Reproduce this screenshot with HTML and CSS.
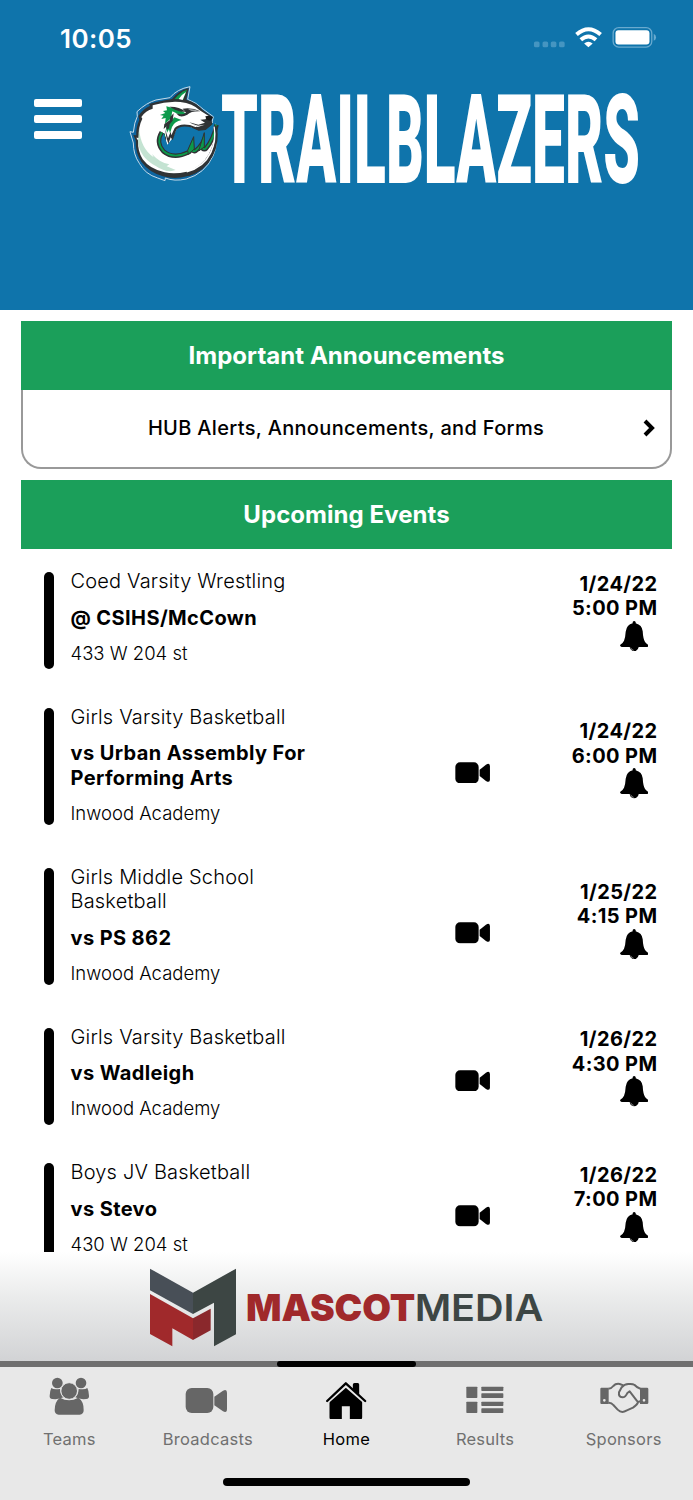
FILE: index.html
```
<!doctype html>
<html lang="en">
<head>
	<meta charset="UTF-8" />
	<title>Trailblazers</title>
	<link rel="stylesheet" href="styles.css">
</head>
<body>
	<svg class="defs">
		<symbol id="camera" viewBox="75 635 106 65">
			<rect x="76" y="636" width="70" height="63" rx="14"/>
			<path d="M149 658L168 643Q180 636 180 648V687Q180 699 168 692L149 677Z"/>
		</symbol>
		<symbol id="bell" viewBox="570 211 85 91">
			<path d="M608 218V214Q612 208 617 214V218Q636 223 638 242Q639 264 645 274Q649 279 654 282Q656 288 650 289H626Q624 301 612 302Q600 300 599 289H575Q568 287 571 282Q579 277 582 270Q586 261 587 243Q590 222 608 218Z"/>
			<path d="M602 291Q604 298 611 299" fill="none" stroke="#fff" stroke-width="1.5"/>
		</symbol>
		<path id="curl" d="M131 160Q115 187 135 209Q162 231 203 211L221 170L223 207Q245 189 253 158L253 201Q275 175 283 133"/>
	</svg>
	<section id="wrap">
		<header>
			<div class="status">
				<span class="time">10:05</span>
				<svg class="signal" viewBox="100 25 375 100">
					<g fill="#4595c1">
						<rect x="101" y="96" width="17" height="18" rx="5"/>
						<rect x="127" y="96" width="17" height="18" rx="5"/>
						<rect x="152" y="96" width="17" height="18" rx="5"/>
						<rect x="177" y="96" width="17" height="18" rx="5"/>
					</g>
					<g fill="none" stroke="#fff" stroke-width="12">
						<path d="M230 75Q266 43 303 75"/>
						<path d="M243 91Q266 71 289 91"/>
					</g>
					<path d="M253 102Q266 92 279 102L266 114Z" fill="#fff"/>
					<rect x="341" y="54" width="117" height="59" rx="17" fill="none" stroke="#69aacf" stroke-width="4"/>
					<rect x="348" y="62" width="103" height="43" rx="9" fill="#fff"/>
					<path d="M464 73Q471 76 471 84Q471 91 464 94Z" fill="#69aacf"/>
				</svg>
			</div>
			<div class="brand">
				<a href="javascript:;" class="menu"><i></i><i></i><i></i></a>
				<svg class="logo" viewBox="0 0 530 110">
					<g transform="scale(.3333)">
						<!-- outer keyline -->
						<path d="M210 20L203 58Q230 68 250 88L280 110L276 127L285 128Q297 190 279 228Q255 281 199 297Q163 305 136 294L135 302L113 294Q76 283 58 250Q40 224 40 189L30 155L40 157Q43 126 52 109L51 95Q80 68 108 60L150 53Q171 27 210 20Z" fill="#0d65a0" stroke="#c7dcea" stroke-width="3"/>
						<path d="M206 24L199 59Q230 68 248 90L277 111Q277 125 264 137L283 133Q296 180 275 228Q253 275 204 288Q164 299 129 289Q86 276 64 245Q46 219 47 181L40 165L49 166Q47 145 58 119L55 108Q68 88 90 77L87 72Q112 64 156 57Q176 31 206 24Z" fill="#303335"/>
						<path d="M201 29L190 58L164 57Q179 37 201 29Z" fill="#0b9a4a"/>
						<path d="M198 36L188 60L176 57Q184 44 198 36Z" fill="#fff"/>
						<!-- body -->
						<path d="M98 76Q139 63 181 66Q218 70 239 91L270 110L266 122L253 136L228 141L210 150L246 208L262 202Q277 184 281 160Q285 185 267 222Q244 262 200 275Q164 284 134 277Q90 268 68 238Q52 211 55 183L49 173L58 174Q53 143 67 116L64 111Q77 91 98 86Z" fill="#fff"/>
						<path d="M57 145Q62 206 101 232L96 222Q120 249 148 253L140 259L167 270Q141 281 106 257Q59 232 54 185Z" fill="#c4e3d2"/>
						<!-- curl of the tail -->
						<g fill="none" stroke-linejoin="round">
							<use href="#curl" stroke="#303335" stroke-width="27"/>
							<use href="#curl" stroke="#0b9a4a" stroke-width="18"/>
							<use href="#curl" stroke="#303335" stroke-width="7"/>
						</g>
						<path d="M131 160Q115 187 135 209Q162 231 203 211L221 170L223 207Q245 189 253 158L253 201Q275 175 283 133L291 128L282 119L276 134L257 148L236 151L212 141Q185 132 170 147L158 174L142 194Z" fill="#0f74ab"/>
						<path d="M203 211L205 223L223 207L221 170ZM253 158L246 180L236 213L253 201Z" fill="#0b9a4a" stroke="#303335" stroke-width="3"/>
						<path d="M283 140Q290 178 272 218Q251 262 200 275" fill="none" stroke="#fff" stroke-width="5"/>
						<path d="M287 138Q297 185 276 226Q254 271 204 286" fill="none" stroke="#303335" stroke-width="6"/>
						<!-- face -->
						<path d="M137 120L163 102L208 118L214 132Q183 130 167 144L157 168L144 188L135 166Z" fill="#fff"/>
						<path d="M135 146L139 171L145 192L152 172L158 181L169 149Q184 134 212 142L236 152L257 150L277 133L275 122L257 139L234 144L210 135Q178 129 164 144L154 166L152 155L144 175Z" fill="#303335"/>
						<path d="M163 112L185 120Q163 124 156 141L150 160L147 148L141 158L138 141Z" fill="#0b9a4a"/>
						<path d="M139 79L180 90L199 101L180 105L157 94L153 115L135 131L137 114L124 117L131 107L120 105L136 99L129 93L141 91Z" fill="#0b9a4a"/>
						<path d="M148 80Q177 79 197 95Q181 97 165 89ZM133 132L149 121L151 110L161 100L158 122L149 133L147 145L139 149L140 139L131 147Z" fill="#303335"/>
						<path d="M188 86Q218 82 241 94Q213 93 202 104Q180 116 168 100Q185 107 198 98ZM208 127L235 134L255 128L241 119L256 118L263 109L271 110L273 123L256 137L232 140Z" fill="#303335"/>
						<path d="M204 88Q225 87 236 93L214 92Z" fill="#b6babb"/>
						<path d="M212 130L234 137L254 134L233 141Z" fill="#fff"/>
						<path d="M256 109Q272 104 279 112L272 122L260 120Z" fill="#191919"/>
					</g>
					<text x="101" y="103" textLength="419" lengthAdjust="spacingAndGlyphs" class="team">TRAILBLAZERS</text>
				</svg>
			</div>
		</header>

		<main>
			<h2>Important Announcements</h2>
			<a href="javascript:;" class="notice">
				<span>HUB Alerts, Announcements, and Forms</span>
				<svg viewBox="0 0 12 18"><path d="M2 2L9 9L2 16"/></svg>
			</a>
			<h2>Upcoming Events</h2>
			<ul class="events">
				<li>
					<i class="bar"></i>
					<div class="info">
						<p>Coed Varsity Wrestling</p>
						<b>@ CSIHS/McCown</b>
						<span>433 W 204 st</span>
					</div>
					<div class="cam"></div>
					<div class="when">1/24/22<br>5:00 PM<svg><use href="#bell"/></svg></div>
				</li>
				<li class="tall">
					<i class="bar"></i>
					<div class="info">
						<p>Girls Varsity Basketball</p>
						<b>vs Urban Assembly For<br>Performing Arts</b>
						<span>Inwood Academy</span>
					</div>
					<div class="cam"><svg><use href="#camera"/></svg></div>
					<div class="when">1/24/22<br>6:00 PM<svg><use href="#bell"/></svg></div>
				</li>
				<li class="tall">
					<i class="bar"></i>
					<div class="info">
						<p>Girls Middle School<br>Basketball</p>
						<b>vs PS 862</b>
						<span>Inwood Academy</span>
					</div>
					<div class="cam"><svg><use href="#camera"/></svg></div>
					<div class="when">1/25/22<br>4:15 PM<svg><use href="#bell"/></svg></div>
				</li>
				<li>
					<i class="bar"></i>
					<div class="info">
						<p>Girls Varsity Basketball</p>
						<b>vs Wadleigh</b>
						<span>Inwood Academy</span>
					</div>
					<div class="cam"><svg><use href="#camera"/></svg></div>
					<div class="when">1/26/22<br>4:30 PM<svg><use href="#bell"/></svg></div>
				</li>
				<li>
					<i class="bar"></i>
					<div class="info">
						<p>Boys JV Basketball</p>
						<b>vs Stevo</b>
						<span>430 W 204 st</span>
					</div>
					<div class="cam"><svg><use href="#camera"/></svg></div>
					<div class="when">1/26/22<br>7:00 PM<svg><use href="#bell"/></svg></div>
				</li>
			</ul>
		</main>

		<div class="sponsor">
			<svg viewBox="0 36 1290 327">
				<path d="M60 86L189 158V222L60 151Z" fill="#484f57"/>
				<path d="M189 158L318 86V283L252 319V188L189 222Z" fill="#3d4644"/>
				<path d="M60 162L189 235V300L127 265V319L60 282Z" fill="#a0292b"/>
				<path d="M189 235L242 206V271L189 300Z" fill="#8a282c"/>
				<text x="348" y="243" textLength="508" lengthAdjust="spacingAndGlyphs" class="mascot">MASCOT</text>
				<text x="854" y="243" textLength="386" lengthAdjust="spacingAndGlyphs" class="media">MEDIA</text>
			</svg>
		</div>
		<div class="progress"><i></i></div>

		<nav>
			<a href="javascript:;">
				<svg viewBox="118 72 180 135">
					<circle cx="173" cy="99" r="16"/><circle cx="244" cy="99" r="16"/>
					<path d="M155 114Q162 120 181 117Q182 134 191 142Q179 149 158 147Q149 146 150 137Q151 121 155 114ZM263 114Q256 120 237 117Q236 134 227 142Q239 149 260 147Q269 146 268 137Q267 121 263 114Z"/>
					<path d="M181 143Q208 158 236 143Q253 154 252 181Q252 193 240 194H177Q165 193 165 181Q165 154 181 143Z"/>
					<circle cx="208.500" cy="123" r="25" stroke="#e8e8e8" stroke-width="3"/>
				</svg>
				<span>Teams</span>
			</a>
			<a href="javascript:;">
				<svg viewBox="534 72 180 135">
					<rect x="557" y="114" width="83" height="75" rx="18"/>
					<path d="M643 140L669 122Q681 116 681 128V177Q681 190 669 184L643 166Z"/>
				</svg>
				<span>Broadcasts</span>
			</a>
			<a href="javascript:;" class="active">
				<svg viewBox="-79.500 72 180 135">
					<path d="M-39 152L10 107L59 152V202Q59 209 51 210H22V169H-2V210H-32Q-39 209-39 202Z"/>
					<path d="M31 120V104Q31 99 36 99H46Q50 99 50 104V136Z"/>
					<path d="M-45 155L10 106L66 155" fill="none" stroke="#e8e8e8" stroke-width="11"/>
					<path d="M-46 153L10 100L68 153" fill="none" stroke="#000" stroke-width="7" stroke-linecap="round" stroke-linejoin="round"/>
				</svg>
				<span>Home</span>
			</a>
			<a href="javascript:;">
				<svg viewBox="336 72 180 135">
					<rect x="370" y="110" width="33" height="34" rx="2"/>
					<rect x="370" y="155" width="33" height="34" rx="2"/>
					<rect x="415" y="110" width="66" height="13" rx="2"/>
					<rect x="415" y="130" width="66" height="14" rx="2"/>
					<rect x="415" y="155" width="66" height="13" rx="2"/>
					<rect x="415" y="175" width="66" height="14" rx="2"/>
				</svg>
				<span>Results</span>
			</a>
			<a href="javascript:;">
				<svg viewBox="752 72 180 135">
					<path fill-rule="evenodd" d="M774 113H796V162H774Q771 162 771 158V117Q771 113 774 113ZM783 147A4 4 0 1 0 783 155A4 4 0 1 0 783 147ZM890 113H911Q915 113 915 117V158Q915 162 911 162H890ZM902 147A4 4 0 1 0 902 155A4 4 0 1 0 902 147Z"/>
					<path d="M795 116Q804 116 810 108Q817 100 829 102L840 106M795 158Q804 157 810 165L823 179Q835 191 849 182L869 173Q883 163 884 156L891 154M891 116Q882 114 874 105Q868 101 857 102Q844 101 835 112L827 127Q825 140 837 142Q847 142 852 129L859 124L882 154" fill="none" stroke="#666" stroke-width="6" stroke-linejoin="round"/>
				</svg>
				<span>Sponsors</span>
			</a>
		</nav>
		<div class="handle"><i></i></div>
	</section>
</body>
</html>
```

FILE: styles.css
```
*{
	margin: 0;
	padding: 0;
	box-sizing: border-box;
}
body{
	font-family: Inter, "Liberation Sans", sans-serif;
	background: #fff;
	color: #000;
}
a{
	color: inherit;
	text-decoration: none;
}
svg{
	display: block;
}
.defs{
	display: none;
}
#wrap{
	width: 693px;
	height: 1500px;
	display: flex;
	flex-direction: column;
	overflow: hidden;
}

/* header */
header{
	height: 310px;
	flex: none;
	background: #0f74ab;
}
.status{
	height: 80px;
	padding: 18px 35px 0 60px;
	display: flex;
	justify-content: space-between;
}
.time{
	font-size: 26px;
	font-weight: 600;
	line-height: 41px;
	letter-spacing: .4px;
	color: #fff;
}
.signal{
	width: 125px;
	height: 33px;
}
.brand{
	display: flex;
}
.menu{
	width: 86px;
	padding: 19px 4px 0 33.5px;
	margin-right: 34px;
	display: flex;
	flex-direction: column;
	gap: 8px;
}
.menu i{
	width: 48px;
	height: 8px;
	border-radius: 2px;
	background: #fff;
}
.logo{
	width: 530px;
	height: 110px;
	overflow: visible;
}
.team{
	font-family: Roboto, sans-serif;
	font-weight: 900;
	font-size: 125px;
	fill: #fff;
}

/* content */
main{
	height: 942px;
	flex: none;
	padding: 11px 21px 0;
	overflow: hidden;
}
h2{
	height: 69px;
	font-size: 24px;
	font-weight: 700;
	line-height: 70px;
	letter-spacing: .05px;
	text-align: center;
	color: #fff;
	background: #1b9f5a;
}
.notice{
	height: 79px;
	margin-bottom: 11px;
	padding: 0 15px 1px 26px;
	display: flex;
	align-items: center;
	border: 2px solid #999;
	border-top: 0;
	border-radius: 0 0 20px 20px;
	font-size: 20px;
	font-weight: 500;
	letter-spacing: .33px;
}
.notice span{
	flex: 1;
	text-align: center;
}
.notice svg{
	width: 12px;
	height: 18px;
	fill: none;
	stroke: #000;
	stroke-width: 4;
}
.events{
	list-style: none;
}
.events li{
	height: 135.6px;
	padding-left: 23px;
	display: flex;
}
.events li.tall{
	height: 160.1px;
}
.bar{
	width: 10px;
	height: 97px;
	margin: 23px 16.5px 0 0;
	border-radius: 5px;
	background: #000;
}
.tall .bar{
	height: 117.5px;
}
.info{
	width: 350px;
	padding-top: 20px;
	font-size: 20px;
	line-height: 24.5px;
}
.info p{
	font-weight: 300;
	letter-spacing: .18px;
}
.info b{
	display: block;
	margin: 12px 0 10.5px;
	font-weight: 700;
	letter-spacing: .4px;
}
.info span{
	font-size: 18.5px;
	font-weight: 300;
}
.cam{
	width: 104.5px;
	padding: 16px 0 0 34px;
	align-self: center;
}
.cam svg{
	width: 35.3px;
	height: 21.7px;
}
.when{
	flex: 1;
	padding: 0 14.5px 11px 0;
	align-self: center;
	text-align: right;
	font-size: 20px;
	font-weight: 700;
	line-height: 24.5px;
	letter-spacing: .4px;
	white-space: nowrap;
}
.when svg{
	width: 28.4px;
	height: 30.4px;
	margin: 0 9.5px 0 auto;
}

/* sponsor banner */
.sponsor{
	height: 109px;
	flex: none;
	padding-left: 130px;
	background: linear-gradient(#fff, #ebecec 40%, #d2d3d5);
}
.sponsor svg{
	width: 430px;
	height: 109px;
}
.mascot, .media{
	font-family: Inter, sans-serif;
	font-size: 112px;
}
.mascot{
	font-weight: 900;
	fill: #a0292b;
}
.media{
	font-weight: 600;
	fill: #3d4644;
}
.progress{
	height: 6px;
	flex: none;
	background: #6f6f6f;
}
.progress i{
	display: block;
	width: 139px;
	height: 6px;
	margin: 0 auto;
	border-radius: 3px;
	background: #000;
}

/* tab bar */
nav{
	height: 111px;
	flex: none;
	display: flex;
	background: #e8e8e8;
}
nav a{
	flex: 1;
	padding-top: 7px;
	text-align: center;
	font-size: 16.5px;
	color: #707070;
}
nav svg{
	width: 60px;
	height: 45px;
	margin: 0 auto;
	fill: #666;
}
nav span{
	display: block;
	line-height: 40px;
	letter-spacing: .25px;
}
nav a.active{
	color: #000;
}
nav a.active svg{
	fill: #000;
}
.handle{
	flex: 1;
	background: #e8e8e8;
}
.handle i{
	display: block;
	width: 247px;
	height: 8px;
	margin: 0 auto;
	border-radius: 4px;
	background: #000;
}
```
